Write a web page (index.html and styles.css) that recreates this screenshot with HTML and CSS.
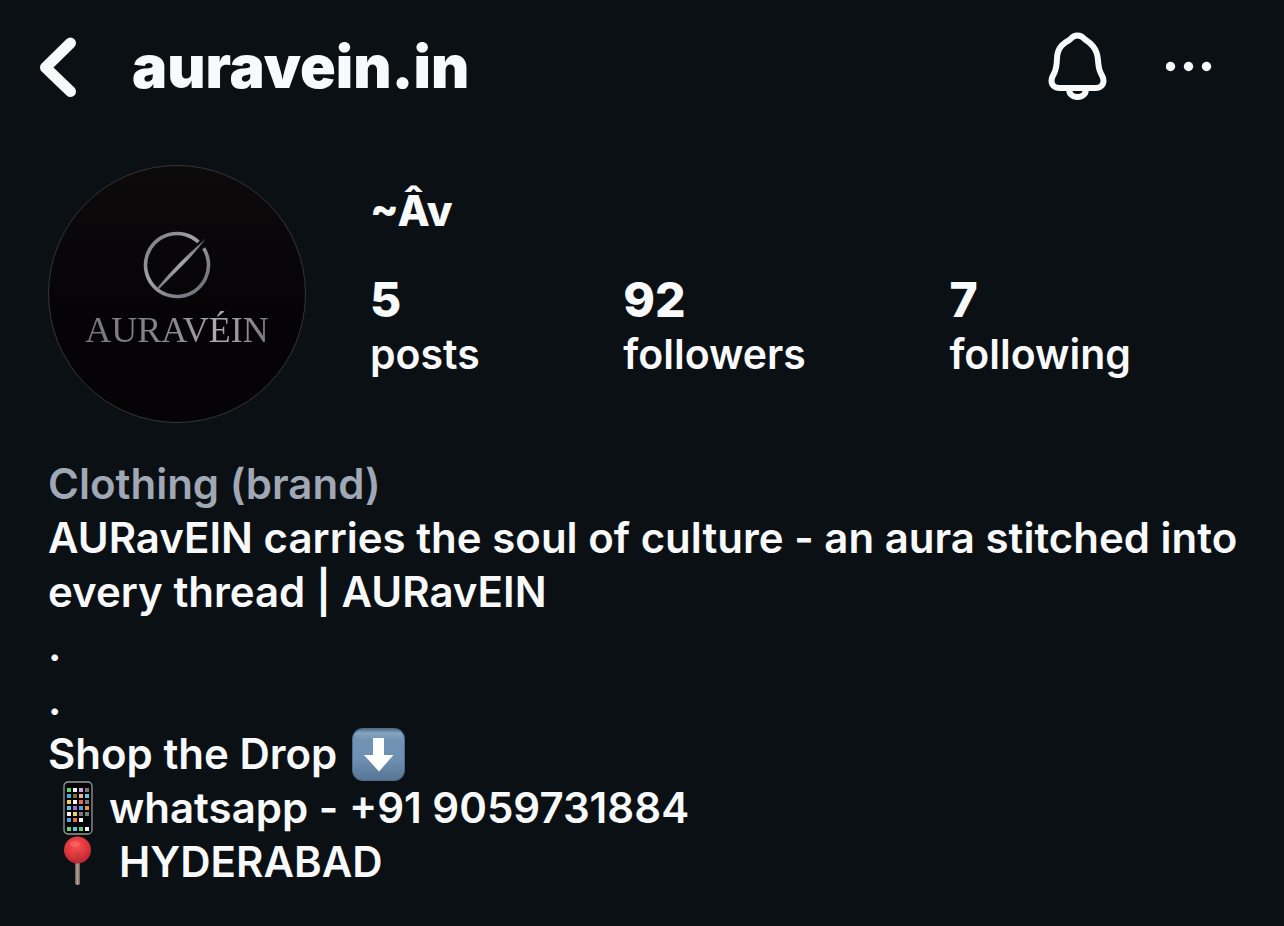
FILE: index.html
```html
<!DOCTYPE html>
<html lang="en">
<head>
<meta charset="utf-8">
<meta name="viewport" content="width=device-width, initial-scale=1">
<title>auravein.in</title>
<link rel="stylesheet" href="styles.css">
</head>
<body>
<header class="topbar">
  <button class="icon-button" type="button" aria-label="Back">
    <svg width="40" height="64" viewBox="0 0 40 64" fill="none" stroke="currentColor" stroke-width="11" stroke-linecap="round" stroke-linejoin="round"><path d="M32.500 8 7.500 32.500 32.500 56.500"/></svg>
  </button>
  <h1 class="handle">auravein.in</h1>
  <button class="icon-button" type="button" aria-label="Notifications">
    <svg width="60" height="70" viewBox="0 0 60 70" fill="none" stroke="currentColor" stroke-width="6" stroke-linejoin="round"><path d="M29.500 3.500C25.500 3.500 24 5 22 7.500C17.500 10 9.500 14 9 26C8.800 34 8.500 37 6 41.500C4 45 3.500 46 3.500 48.500C3.500 53 6.500 56 11.500 56H47.500C52.500 56 55.500 53 55.500 48.500C55.500 46 55 45 53 41.500C50.500 37 50.500 34 50 28C49 15 41.500 10.500 37 7.500C35 5 33.500 3.500 29.500 3.500Z"/><path d="M21 57C21 62 24.500 65 29.500 65S38 62 38 57"/></svg>
  </button>
  <button class="icon-button more" type="button" aria-label="More options">
    <svg width="46" height="12" viewBox="0 0 46 12" fill="currentColor"><circle cx="4.500" cy="5.500" r="4.700"/><circle cx="22.500" cy="5.500" r="4.700"/><circle cx="40.500" cy="5.500" r="4.700"/></svg>
  </button>
</header>
<main class="profile">
  <section class="summary">
    <div class="avatar">
      <svg width="70" height="70" viewBox="0 0 70 70" aria-hidden="true">
        <defs>
          <linearGradient id="metal" x1="0" y1="0" x2="1" y2="1"><stop offset="0" stop-color="#74777b"/><stop offset=".4" stop-color="#a1a3a5"/><stop offset="1" stop-color="#626970"/></linearGradient>
          <linearGradient id="needle" x1="1" y1="0" x2="0" y2="1"><stop offset="0" stop-color="#65686b"/><stop offset=".5" stop-color="#a4a7aa"/><stop offset="1" stop-color="#777c81"/></linearGradient>
        </defs>
        <path d="M56.500 12A31.500 31.500 0 1 0 61.700 18.300" fill="none" stroke="url(#metal)" stroke-width="3.600"/>
        <path d="M64 8.500Q53 23 40.500 35.500T17 59L15.500 57.500Q26 44.500 38 32.500T64 8.500Z" fill="url(#needle)"/>
      </svg>
      <span class="wordmark">AURAVÉIN</span>
    </div>
    <div class="details">
      <h2 class="name">~Âv</h2>
      <ul class="stats">
        <li><a href="#posts"><strong>5</strong><span>posts</span></a></li>
        <li><a href="#followers"><strong>92</strong><span>followers</span></a></li>
        <li><a href="#following"><strong>7</strong><span>following</span></a></li>
      </ul>
    </div>
  </section>
  <section class="bio">
    <p class="category">Clothing (brand)</p>
    <p>AURavEIN carries the soul of culture - an aura stitched into every thread | AURavEIN</p>
    <p>.</p>
    <p>.</p>
    <p class="line">Shop the Drop
      <svg width="54" height="54" viewBox="0 0 54 54" role="img" aria-label="Down arrow">
        <defs><linearGradient id="tile" x1="0" y1="0" x2="0" y2="1"><stop offset="0" stop-color="#54708a"/><stop offset=".08" stop-color="#86a5c0"/><stop offset=".2" stop-color="#7194b5"/><stop offset=".6" stop-color="#6d8fb2"/><stop offset="1" stop-color="#587695"/></linearGradient></defs>
        <rect x="1" y="1" width="53" height="53" rx="11" fill="#4f6c88"/>
        <rect x="2" y="2" width="51" height="51" rx="10" fill="url(#tile)"/>
        <path d="M22 11H33V28H42.500L28 44.500 13 28H22Z" fill="#fff"/>
      </svg>
    </p>
    <p class="line marked">
      <svg width="30" height="54" viewBox="0 0 30 54" role="img" aria-label="Mobile phone">
        <rect x="1" y="1" width="28" height="52" rx="4" fill="#050506" stroke="#96999b" stroke-width="1.300"/>
        <g stroke-width="4">
          <path stroke="#5fd66b" d="M4 9h4M4 48h4"/><path stroke="#f7f7f7" d="M10 9h4M10 21h4M4 33h4M16 39h4M22 48h4"/>
          <path stroke="#d9a0db" d="M16 9h4"/><path stroke="#777b7e" d="M22 9h4M22 21h4M16 33h4M22 33h4"/>
          <path stroke="#49a9e7" d="M4 15h4M16 27h4M4 39h4"/><path stroke="#77743d" d="M10 15h4"/><path stroke="#f1afa6" d="M16 15h4"/>
          <path stroke="#58c8e5" d="M22 15h4M4 27h4M10 48h4"/><path stroke="#f3d05c" d="M4 21h4M10 33h4"/><path stroke="#ed6754" d="M16 21h4M10 39h4"/>
          <path stroke="#b26bd3" d="M10 27h4"/><path stroke="#ef9638" d="M22 27h4"/><path stroke="#62ce75" d="M16 48h4"/>
        </g>
      </svg>
      <span>whatsapp - +91 9059731884</span>
    </p>
    <p class="line marked place">
      <svg width="30" height="54" viewBox="0 0 30 54" role="img" aria-label="Round pushpin">
        <defs>
          <radialGradient id="ball" cx=".45" cy=".35" r=".65"><stop offset="0" stop-color="#f4524f"/><stop offset=".6" stop-color="#e0363d"/><stop offset="1" stop-color="#b9252e"/></radialGradient>
          <linearGradient id="pin" x1="0" x2="1"><stop offset="0" stop-color="#675753"/><stop offset=".5" stop-color="#b5a29d"/><stop offset="1" stop-color="#655653"/></linearGradient>
        </defs>
        <path d="M12 25h5v24q-2.500 2-5 0z" fill="url(#pin)"/>
        <circle cx="14.500" cy="15" r="13.500" fill="url(#ball)"/>
        <ellipse cx="12" cy="9" rx="5" ry="3" fill="#ff8c88" opacity=".35"/>
        <path d="M12 18h6l-1 9h-4z" fill="#a74337" opacity=".45"/>
      </svg>
      <span>HYDERABAD</span>
    </p>
  </section>
</main>
</body>
</html>
```
FILE: styles.css
```css
* {
  box-sizing: border-box;
}

body {
  margin: 0;
  background: #0b1014;
  color: #f8f9fa;
  font: 600 42px/54px Inter, "Liberation Sans", sans-serif;
}

h1, h2, p, ul {
  margin: 0;
  padding: 0;
}

svg {
  display: block;
  flex: none;
}

a {
  color: inherit;
  text-decoration: none;
}

.topbar {
  display: flex;
  align-items: center;
  min-height: 134px;
  padding: 0 72px 0 38px;
}

.icon-button {
  padding: 0;
  border: 0;
  background: none;
  color: inherit;
  cursor: pointer;
}

.handle {
  flex: 1;
  padding-left: 54px;
  font-size: 59px;
  font-weight: 900;
  line-height: 72px;
}

.more {
  margin-left: 58px;
}

.profile {
  padding: 31px 40px 36px 48px;
}

.summary {
  display: flex;
  gap: 64px;
}

.avatar {
  display: flex;
  flex: none;
  flex-direction: column;
  align-items: center;
  width: 258px;
  height: 258px;
  padding-top: 64px;
  border: 1px solid #353536;
  border-radius: 50%;
  background: linear-gradient(#0d0a0c, #050305 60%);
}

.wordmark {
  background: linear-gradient(90deg, #73767a, #888b8f 50%, #acadaf 72%, #75777c);
  background-clip: text;
  color: transparent;
  font: 400 36px/60px "Liberation Serif", serif;
}

.details {
  flex: 1;
  padding: 19px 113px 0 0;
}

.name {
  font-size: 42px;
  font-weight: 800;
}

.stats {
  display: flex;
  justify-content: space-between;
  padding-top: 35px;
  font-size: 41px;
  list-style: none;
}

.stats strong {
  display: block;
  font-size: 48px;
  font-weight: 800;
}

.bio {
  padding-top: 34px;
}

.category {
  color: #a0a7b5;
}

.line {
  display: flex;
  align-items: center;
  gap: 14px;
}

.marked {
  gap: 16px;
  padding-left: 15px;
}

.place {
  gap: 26px;
}
```
